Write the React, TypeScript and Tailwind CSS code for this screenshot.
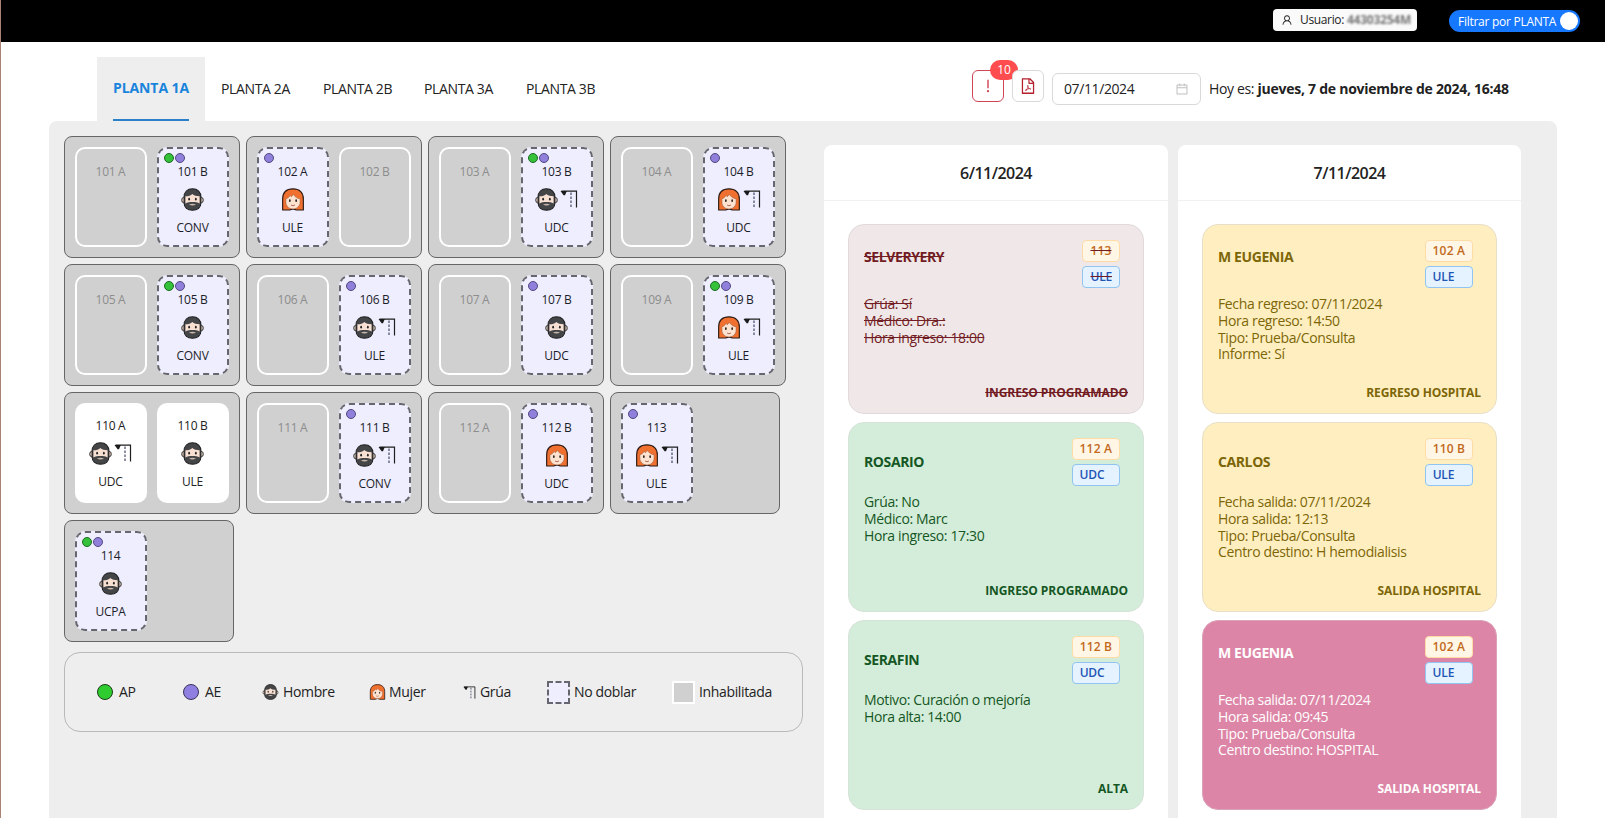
import type { ReactNode } from "react";
import {
  AiOutlineCalendar,
  AiOutlineExclamation,
  AiOutlineFilePdf,
  AiOutlineUser,
} from "react-icons/ai";

type Bed = {
  name: string;
  state: "off" | "dashed" | "plain";
  who?: "man" | "woman";
  crane?: boolean;
  ap?: boolean;
  unit?: string;
};

const off = (name: string): Bed => ({ name, state: "off" });
const dashed = (
  name: string,
  who: "man" | "woman",
  unit: string,
  crane = false,
  ap = false,
): Bed => ({ name, state: "dashed", who, unit, crane, ap });

const rooms: Bed[][] = [
  [off("101 A"), dashed("101 B", "man", "CONV", false, true)],
  [dashed("102 A", "woman", "ULE"), off("102 B")],
  [off("103 A"), dashed("103 B", "man", "UDC", true, true)],
  [off("104 A"), dashed("104 B", "woman", "UDC", true)],
  [off("105 A"), dashed("105 B", "man", "CONV", false, true)],
  [off("106 A"), dashed("106 B", "man", "ULE", true)],
  [off("107 A"), dashed("107 B", "man", "UDC")],
  [off("109 A"), dashed("109 B", "woman", "ULE", true, true)],
  [
    { name: "110 A", state: "plain", who: "man", crane: true, unit: "UDC" },
    { name: "110 B", state: "plain", who: "man", unit: "ULE" },
  ],
  [off("111 A"), dashed("111 B", "man", "CONV", true)],
  [off("112 A"), dashed("112 B", "woman", "UDC")],
  [dashed("113", "woman", "ULE", true)],
  [dashed("114", "man", "UCPA", false, true)],
];

type Event = {
  name: string;
  bed: string;
  unit: string;
  lines: string[];
  status: string;
  tone: "cancelled" | "green" | "yellow" | "pink";
  nameTop: string;
};

const days: { date: string; events: Event[] }[] = [
  {
    date: "6/11/2024",
    events: [
      {
        name: "SELVERYERY",
        bed: "113",
        unit: "ULE",
        lines: ["Grúa: Sí", "Médico: Dra.:", "Hora ingreso: 18:00"],
        status: "INGRESO PROGRAMADO",
        tone: "cancelled",
        nameTop: "pt-[7px]",
      },
      {
        name: "ROSARIO",
        bed: "112 A",
        unit: "UDC",
        lines: ["Grúa: No", "Médico: Marc", "Hora ingreso: 17:30"],
        status: "INGRESO PROGRAMADO",
        tone: "green",
        nameTop: "pt-[14px]",
      },
      {
        name: "SERAFIN",
        bed: "112 B",
        unit: "UDC",
        lines: ["Motivo: Curación o mejoría", "Hora alta: 14:00"],
        status: "ALTA",
        tone: "green",
        nameTop: "pt-[14px]",
      },
    ],
  },
  {
    date: "7/11/2024",
    events: [
      {
        name: "M EUGENIA",
        bed: "102 A",
        unit: "ULE",
        lines: [
          "Fecha regreso: 07/11/2024",
          "Hora regreso: 14:50",
          "Tipo: Prueba/Consulta",
          "Informe: Sí",
        ],
        status: "REGRESO HOSPITAL",
        tone: "yellow",
        nameTop: "pt-[7px]",
      },
      {
        name: "CARLOS",
        bed: "110 B",
        unit: "ULE",
        lines: [
          "Fecha salida: 07/11/2024",
          "Hora salida: 12:13",
          "Tipo: Prueba/Consulta",
          "Centro destino: H hemodialisis",
        ],
        status: "SALIDA HOSPITAL",
        tone: "yellow",
        nameTop: "pt-[14px]",
      },
      {
        name: "M EUGENIA",
        bed: "102 A",
        unit: "ULE",
        lines: [
          "Fecha salida: 07/11/2024",
          "Hora salida: 09:45",
          "Tipo: Prueba/Consulta",
          "Centro destino: HOSPITAL",
        ],
        status: "SALIDA HOSPITAL",
        tone: "pink",
        nameTop: "pt-[7px]",
      },
    ],
  },
];

const tones = {
  cancelled: "bg-[#f0e8e8] border-[#e2dada] text-[#721c24] line-through",
  green: "bg-[#d4edda] border-[#d6e3d9] text-[#155724]",
  yellow: "bg-[#ffefc0] border-[#e8dfc8] text-[#7d6608]",
  pink: "bg-[#dd85a6] border-[#dba3ba] text-white",
};

function Man({ className }: { className: string }) {
  return (
    <svg viewBox="0 0 24 24" className={className}>
      <ellipse cx="2.700" cy="12.600" rx="1.900" ry="2.800" fill="#f6dccb" stroke="#262626" strokeWidth="1" />
      <ellipse cx="21.300" cy="12.600" rx="1.900" ry="2.800" fill="#f6dccb" stroke="#262626" strokeWidth="1" />
      <path
        d="M12 .8C6.600.8 3.200 4.300 3.200 9.500V15.500C3.200 20.300 6.700 23.200 12 23.200S20.800 20.300 20.800 15.500V9.500C20.800 4.300 17.400.8 12 .8Z"
        fill="#444547"
        stroke="#1f1f20"
        strokeWidth="1.100"
      />
      <path
        d="M4.600 8.600C7.500 8.700 10.200 7.800 11.800 6.200C13.500 7.800 16 8.500 19.400 8.500V16.200C17.500 15 15 14.600 12 14.600S6.500 15 4.600 16.200Z"
        fill="#f8e0d2"
      />
      <path d="M8.300 17.400Q12 15.400 15.700 17.400Q12 18.900 8.300 17.400Z" fill="#c9b8ac" />
      <ellipse cx="8.500" cy="11.700" rx=".95" ry="1.400" fill="#262626" />
      <ellipse cx="15.500" cy="11.700" rx=".95" ry="1.400" fill="#262626" />
    </svg>
  );
}

function Woman({ className }: { className: string }) {
  return (
    <svg viewBox="0 0 24 24" className={className}>
      <path
        d="M1.200 23V11.500C1.200 4.500 5.500.9 12 .9S22.800 4.500 22.800 11.500V23H15.500L12 21.800L8.500 23Z"
        fill="#f0702f"
        stroke="#2b1a14"
        strokeWidth="1.200"
        strokeLinejoin="round"
      />
      <path
        d="M4.600 11.200C6.600 10.900 8.200 9.600 8.800 7.600L10.200 9.200L12.300 6.800C14.500 9.800 16.800 11 19.400 11.200V14.500C19.400 19 16.200 21.800 12 21.800S4.600 19 4.600 14.500Z"
        fill="#fce2cf"
        stroke="#7a3a20"
        strokeWidth=".4"
      />
      <ellipse cx="8.700" cy="13.200" rx=".9" ry="1.400" fill="#2a1f1c" />
      <ellipse cx="15.300" cy="13.200" rx=".9" ry="1.400" fill="#2a1f1c" />
      <path d="M10 17.800Q12 19.200 14 17.800" fill="none" stroke="#a85a45" strokeWidth=".9" />
    </svg>
  );
}

function Crane({ className }: { className: string }) {
  return (
    <svg viewBox="0 0 18 18" className={className}>
      <path d="M1.500 1.200H16.500V17.500" fill="none" stroke="#1f1f1f" strokeWidth="1.200" />
      <path d="M.5 1H6.800L5 5.200H3.600Z" fill="#1a1a1a" />
      <path d="M11 2.500V17.500" stroke="#444a63" strokeWidth="1.200" strokeDasharray="2.500 1.500" />
    </svg>
  );
}

function BedCard({ bed }: { bed: Bed }) {
  const frame = {
    off: "border-2 border-white text-[#8d8d8d]",
    dashed: "border-2 border-dashed border-[#66666e] bg-[#eeeeff] text-[#1d1d28]",
    plain: "bg-white text-[#222]",
  }[bed.state];
  return (
    <div
      className={`relative flex h-[100px] w-[72px] flex-col items-center rounded-[10px] pt-[14px] text-[12px] leading-[18px] ${frame}`}
    >
      {bed.state === "dashed" && (
        <div className="absolute top-[4px] left-[5px] flex gap-px">
          {bed.ap && <i className="size-[10px] rounded-full border border-[#1c6b20] bg-[#35c23a]" />}
          <i className="size-[10px] rounded-full border border-[#51487f] bg-[#9080dc]" />
        </div>
      )}
      <span className="-ml-px tracking-[-0.300px]">{bed.name}</span>
      {bed.who && (
        <>
          <div className="mt-[6px] -ml-px flex h-6 items-center gap-[2px]">
            {bed.who === "man" ? (
              <Man className="h-[23px] w-[23px]" />
            ) : (
              <Woman className="h-[23px] w-6" />
            )}
            {bed.crane && <Crane className="size-[18px]" />}
          </div>
          <span className="mt-[8px] -ml-px tracking-[-0.250px]">{bed.unit}</span>
        </>
      )}
    </div>
  );
}

function LegendItem({ icon, label, place }: { icon: ReactNode; label: string; place: string }) {
  return (
    <div className={`flex shrink-0 items-center ${place}`}>
      {icon}
      <span className="-mt-px whitespace-nowrap">{label}</span>
    </div>
  );
}

function EventCard({ event }: { event: Event }) {
  return (
    <article
      className={`flex h-[190px] flex-col rounded-[16px] border px-[15px] pt-[15px] pb-[10px] ${tones[event.tone]}`}
    >
      <div className="flex h-14 items-start justify-between">
        <h3 className={`text-[14px] leading-5 font-bold tracking-[-0.400px] ${event.nameTop}`}>{event.name}</h3>
        <div className="mr-2 flex flex-col gap-1 text-[12px] leading-5 font-semibold">
          <span className="rounded border border-[#ffdba6] bg-[#fff6e6] px-[7px] tracking-[0.150px] text-[#c2691b]">
            {event.bed}
          </span>
          <span className="rounded border border-[#91c4f0] bg-[#e4f3ff] px-[7px] tracking-[-0.200px] text-[#1f55b5]">
            {event.unit}
          </span>
        </div>
      </div>
      <div className="flex-1 text-[14px] leading-[16.800px] tracking-[-0.370px]">
        {event.lines.map((line) => (
          <p key={line}>{line}</p>
        ))}
      </div>
      <p className="text-right text-[12px] leading-5 font-bold tracking-[-0.080px]">{event.status}</p>
    </article>
  );
}

export default function App() {
  return (
    <div className="flex h-[818px] w-[1605px] flex-col overflow-hidden border-l border-[#a98474] bg-white font-['Open_Sans','Noto_Sans',sans-serif] text-[14px] text-[#222]">
      <header className="flex h-[42px] shrink-0 items-start justify-end bg-black pr-[25px]">
        <div className="mt-[9px] mr-8 flex h-[22px] w-36 items-center rounded bg-[#fafafa] pl-2 text-[12px] tracking-[-0.350px]">
          <AiOutlineUser className="mr-[7px] size-3" />
          <span>Usuario:</span>
          <span className="ml-[3px] text-[12px] leading-3 font-bold tracking-[-0.250px] text-[#777] blur-[1.200px]">
            44303254M
          </span>
        </div>
        <div className="mt-[10px] flex h-[22px] w-[131px] items-center justify-between rounded-full bg-[#1677ff] pr-[2px] pl-[9px] text-[12px] tracking-[-0.270px] whitespace-nowrap text-white">
          <span className="pt-px">Filtrar por PLANTA</span>
          <i className="size-[18px] shrink-0 rounded-full bg-white" />
        </div>
      </header>

      <div className="flex h-[79px] shrink-0 items-end justify-between pr-[96px] pl-[96px]">
        <nav className="flex h-16 items-center">
          <div className="flex h-16 w-[108px] flex-col items-center bg-[#eee] pt-[21px]">
            <span className="leading-5 font-bold tracking-[-0.080px] text-[#1a84dc]">PLANTA 1A</span>
            <span className="mt-[21px] h-[2px] w-[76px] bg-[#2c7fc9]" />
          </div>
          <span className="-mt-[2px] ml-4 w-[102px] tracking-[-0.350px]">PLANTA 2A</span>
          <span className="-mt-[2px] w-[101px] tracking-[-0.350px]">PLANTA 2B</span>
          <span className="-mt-[2px] w-[102px] tracking-[-0.350px]">PLANTA 3A</span>
          <span className="-mt-[2px] tracking-[-0.350px]">PLANTA 3B</span>
        </nav>
        <div className="flex h-16 items-start pt-[13px]">
          <div className="relative flex size-8 items-center justify-center rounded-md border border-[#cf4457] bg-white text-[#cf4457]">
            <AiOutlineExclamation className="size-[18px]" />
            <span className="absolute -top-[11px] left-[17px] flex h-5 w-7 items-center justify-center rounded-full bg-[#ff4d4f] text-[12px] text-white">
              10
            </span>
          </div>
          <div className="relative ml-2 flex size-8 items-center justify-center rounded-md border border-[#d9d9d9] bg-white text-[#b3202c]">
            <AiOutlineFilePdf className="size-[18px]" />
          </div>
          <div className="mt-[3px] ml-2 flex h-8 w-[149px] items-center justify-between rounded-md border border-[#d9d9d9] bg-white pr-[11px] pl-[11px]">
            <span className="-mt-px tracking-[-0.400px]">07/11/2024</span>
            <AiOutlineCalendar className="size-[14px] text-[#bfbfbf]" />
          </div>
          <p className="mt-[9px] ml-2 w-[300px] leading-5 tracking-[-0.350px] whitespace-nowrap">
            Hoy es: <b className="tracking-[-0.250px]">jueves, 7 de noviembre de 2024, 16:48</b>
          </p>
        </div>
      </div>

      <main className="mr-[48px] ml-[48px] flex flex-1 items-start rounded-t-lg bg-[#eee] pt-[15px] pl-[15px]">
        <section className="w-[739px] shrink-0">
          <div className="flex flex-wrap gap-[6px]">
            {rooms.map((beds) => (
              <div
                key={beds[0].name}
                className={`flex h-[122px] gap-[10px] rounded-lg border border-[#666] bg-[#d0d0d0] p-[10px] ${
                  beds.length === 1 ? "w-[170px]" : "w-[176px]"
                }`}
              >
                {beds.map((bed) => (
                  <BedCard key={bed.name} bed={bed} />
                ))}
              </div>
            ))}
          </div>
          <div className="mt-[10px] flex h-20 items-center rounded-[16px] border border-[#b9b9b9] pl-8 tracking-[-0.350px]">
            <LegendItem
              place="w-[86px]"
              icon={<i className="mr-[6px] size-4 rounded-full border border-[#1a3d1a] bg-[#2ecc2e]" />}
              label="AP"
            />
            <LegendItem
              place="w-[79px]"
              icon={<i className="mr-[6px] size-4 rounded-full border border-[#39335c] bg-[#8f7fe0]" />}
              label="AE"
            />
            <LegendItem place="w-[107px]" icon={<Man className="mr-[4px] h-4 w-[17px]" />} label="Hombre" />
            <LegendItem place="w-[94px]" icon={<Woman className="mr-[3px] h-4 w-[17px]" />} label="Mujer" />
            <LegendItem place="w-[84px]" icon={<Crane className="mr-[4px] size-[13px]" />} label="Grúa" />
            <LegendItem
              place="w-[125px]"
              icon={<i className="mr-[4px] size-[23px] border-2 border-dashed border-[#66666e] bg-[#eeeeff]" />}
              label="No doblar"
            />
            <LegendItem
              place="w-[110px]"
              icon={<i className="mr-[4px] size-[23px] border-2 border-white bg-[#d0d0d0]" />}
              label="Inhabilitada"
            />
          </div>
        </section>

        <section className="mt-[9px] ml-[21px] flex gap-[10px]">
          {days.map((day, i) => (
            <div key={day.date} className={`h-[700px] rounded-lg bg-white ${i ? "w-[343px]" : "w-[344px]"}`}>
              <h2 className="flex h-14 items-center justify-center border-b border-[#f0f0f0] pt-px text-[16px] font-semibold tracking-[-0.500px]">
                {day.date}
              </h2>
              <div className="flex flex-col gap-2 px-6 pt-[23px]">
                {day.events.map((event) => (
                  <EventCard key={event.status + event.lines[1]} event={event} />
                ))}
              </div>
            </div>
          ))}
        </section>
      </main>
    </div>
  );
}
